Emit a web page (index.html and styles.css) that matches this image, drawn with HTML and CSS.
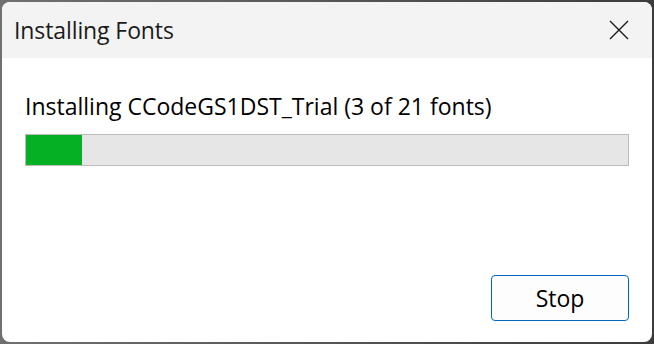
FILE: index.html
```html
<!DOCTYPE html>
<html lang="en">
<head>
    <meta charset="UTF-8">
    <title>Installing Fonts</title>
    <link rel="stylesheet" href="styles.css">
</head>
<body>
    <div class="window">
        <div class="titlebar">
            <span class="title">Installing Fonts</span>
            <button class="close-btn" aria-label="Close">
                <svg width="20" height="20" viewBox="0 0 20 20">
                    <path d="M1 1 L19 19 M19 1 L1 19" stroke="#1b1b1b" stroke-width="1.4" fill="none"/>
                </svg>
            </button>
        </div>
        <div class="content">
            <p class="status">Installing CCodeGS1DST_Trial (3 of 21 fonts)</p>
            <div class="progress">
                <div class="progress-fill" style="width: 9.3%"></div>
            </div>
            <div class="actions">
                <button class="stop-btn">Stop</button>
            </div>
        </div>
    </div>
</body>
</html>
```

FILE: styles.css
```css
html, body {
    margin: 0;
    height: 100%;
}

body {
    background: linear-gradient(90deg, #707070, #3c3c3c);
    padding: 2px;
    box-sizing: border-box;
    font-family: "Open Sans", "Noto Sans", sans-serif;
    color: #1b1b1b;
}

.window {
    height: 100%;
    background: #ffffff;
    border-radius: 8px;
    overflow: hidden;
    display: flex;
    flex-direction: column;
}

.titlebar {
    height: 56px;
    background: #f3f3f3;
    display: flex;
    align-items: center;
    justify-content: space-between;
    padding: 0 23px 0 12px;
    flex-shrink: 0;
}

.title {
    font-size: 23px;
    letter-spacing: -0.1px;
}

.close-btn {
    background: none;
    border: none;
    padding: 0;
    width: 20px;
    height: 20px;
    display: flex;
}

.content {
    flex: 1;
    padding: 33px 23px 21px 23px;
    display: flex;
    flex-direction: column;
}

.status {
    margin: 0 0 13px 0;
    font-size: 23px;
    color: #000;
    line-height: 30px;
}

.progress {
    height: 30px;
    border: 1px solid #bcbcbc;
    background: #e6e6e6;
}

.progress-fill {
    height: 100%;
    background: #06b025;
}

.actions {
    margin-top: auto;
    display: flex;
    justify-content: flex-end;
}

.stop-btn {
    width: 138px;
    height: 46px;
    border: 1px solid #0067c0;
    border-radius: 4px;
    background: #fdfdfd;
    font-family: inherit;
    font-size: 23px;
    color: #000;
}
```
